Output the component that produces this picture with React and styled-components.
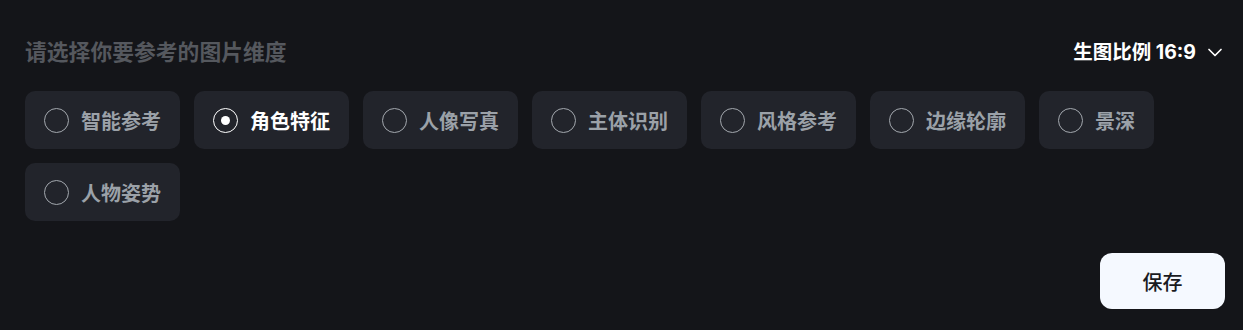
import React, { useState } from "react";
import styled, { createGlobalStyle } from "styled-components";

const GlobalStyle = createGlobalStyle`
	html, body {
		margin: 0;
		padding: 0;
		background: #141519;
	}
	body {
		font-family: "Inter", "Noto Sans CJK SC", sans-serif;
	}
`;

const options = [
	"智能参考",
	"角色特征",
	"人像写真",
	"主体识别",
	"风格参考",
	"边缘轮廓",
	"景深",
	"人物姿势",
];

export default function App() {
	const [selected, setSelected] = useState(1);

	return (
		<>
			<GlobalStyle />
			<Panel>
				<Header>
					<Title>请选择你要参考的图片维度</Title>
					<Ratio>
						生图比例 16:9
						<svg width="18" height="18" viewBox="0 0 18 18" fill="none">
							<path
								d="M3 6.5L9 12.5l6-6"
								stroke="#ffffff"
								strokeWidth="1.7"
								strokeLinecap="round"
								strokeLinejoin="round"
							/>
						</svg>
					</Ratio>
				</Header>
				<Options>
					{options.map((label, index) => (
						<Chip
							key={label}
							$active={index === selected}
							onClick={() => setSelected(index)}
						>
							<Radio $active={index === selected} />
							{label}
						</Chip>
					))}
				</Options>
				<Footer>
					<SaveButton>保存</SaveButton>
				</Footer>
			</Panel>
		</>
	);
}

const Panel = styled.div`
	box-sizing: border-box;
	width: 1243px;
	height: 330px;
	padding: 36px 18px 21px 25px;
	display: flex;
	flex-direction: column;
	background: #141519;
`;

const Header = styled.div`
	display: flex;
	align-items: center;
	justify-content: space-between;
	height: 32px;
`;

const Title = styled.div`
	font-size: 21.8px;
	font-weight: 700;
	color: #55585e;
	line-height: 32px;
`;

const Ratio = styled.div`
	display: flex;
	align-items: center;
	gap: 10px;
	padding-right: 1px;
	font-size: 19.5px;
	font-weight: 700;
	color: #ffffff;
	line-height: 32px;
`;

const Options = styled.div`
	display: flex;
	flex-wrap: wrap;
	gap: 14px;
	margin-top: 23px;
	padding-right: 60px;
`;

const Chip = styled.div`
	box-sizing: border-box;
	height: 58px;
	padding: 0 19px;
	display: flex;
	align-items: center;
	gap: 12px;
	border-radius: 10px;
	background: #22242b;
	color: ${(p) => (p.$active ? "#ffffff" : "#9ba1a8")};
	font-size: 20px;
	font-weight: 700;
	cursor: pointer;
	user-select: none;
`;

const Radio = styled.span`
	box-sizing: border-box;
	width: 25px;
	height: 25px;
	border-radius: 50%;
	border: 1.5px solid ${(p) => (p.$active ? "#ffffff" : "#a3a8ae")};
	display: flex;
	align-items: center;
	justify-content: center;
	&::after {
		content: "";
		width: 9px;
		height: 9px;
		border-radius: 50%;
		background: #ffffff;
		display: ${(p) => (p.$active ? "block" : "none")};
	}
`;

const Footer = styled.div`
	margin-top: auto;
	display: flex;
	justify-content: flex-end;
`;

const SaveButton = styled.button`
	width: 125px;
	height: 56px;
	border: none;
	border-radius: 12px;
	background: #f5f9ff;
	color: #1a1b1f;
	font-family: "Inter", "Noto Sans CJK SC", sans-serif;
	font-size: 20px;
	font-weight: 500;
	cursor: pointer;
`;
